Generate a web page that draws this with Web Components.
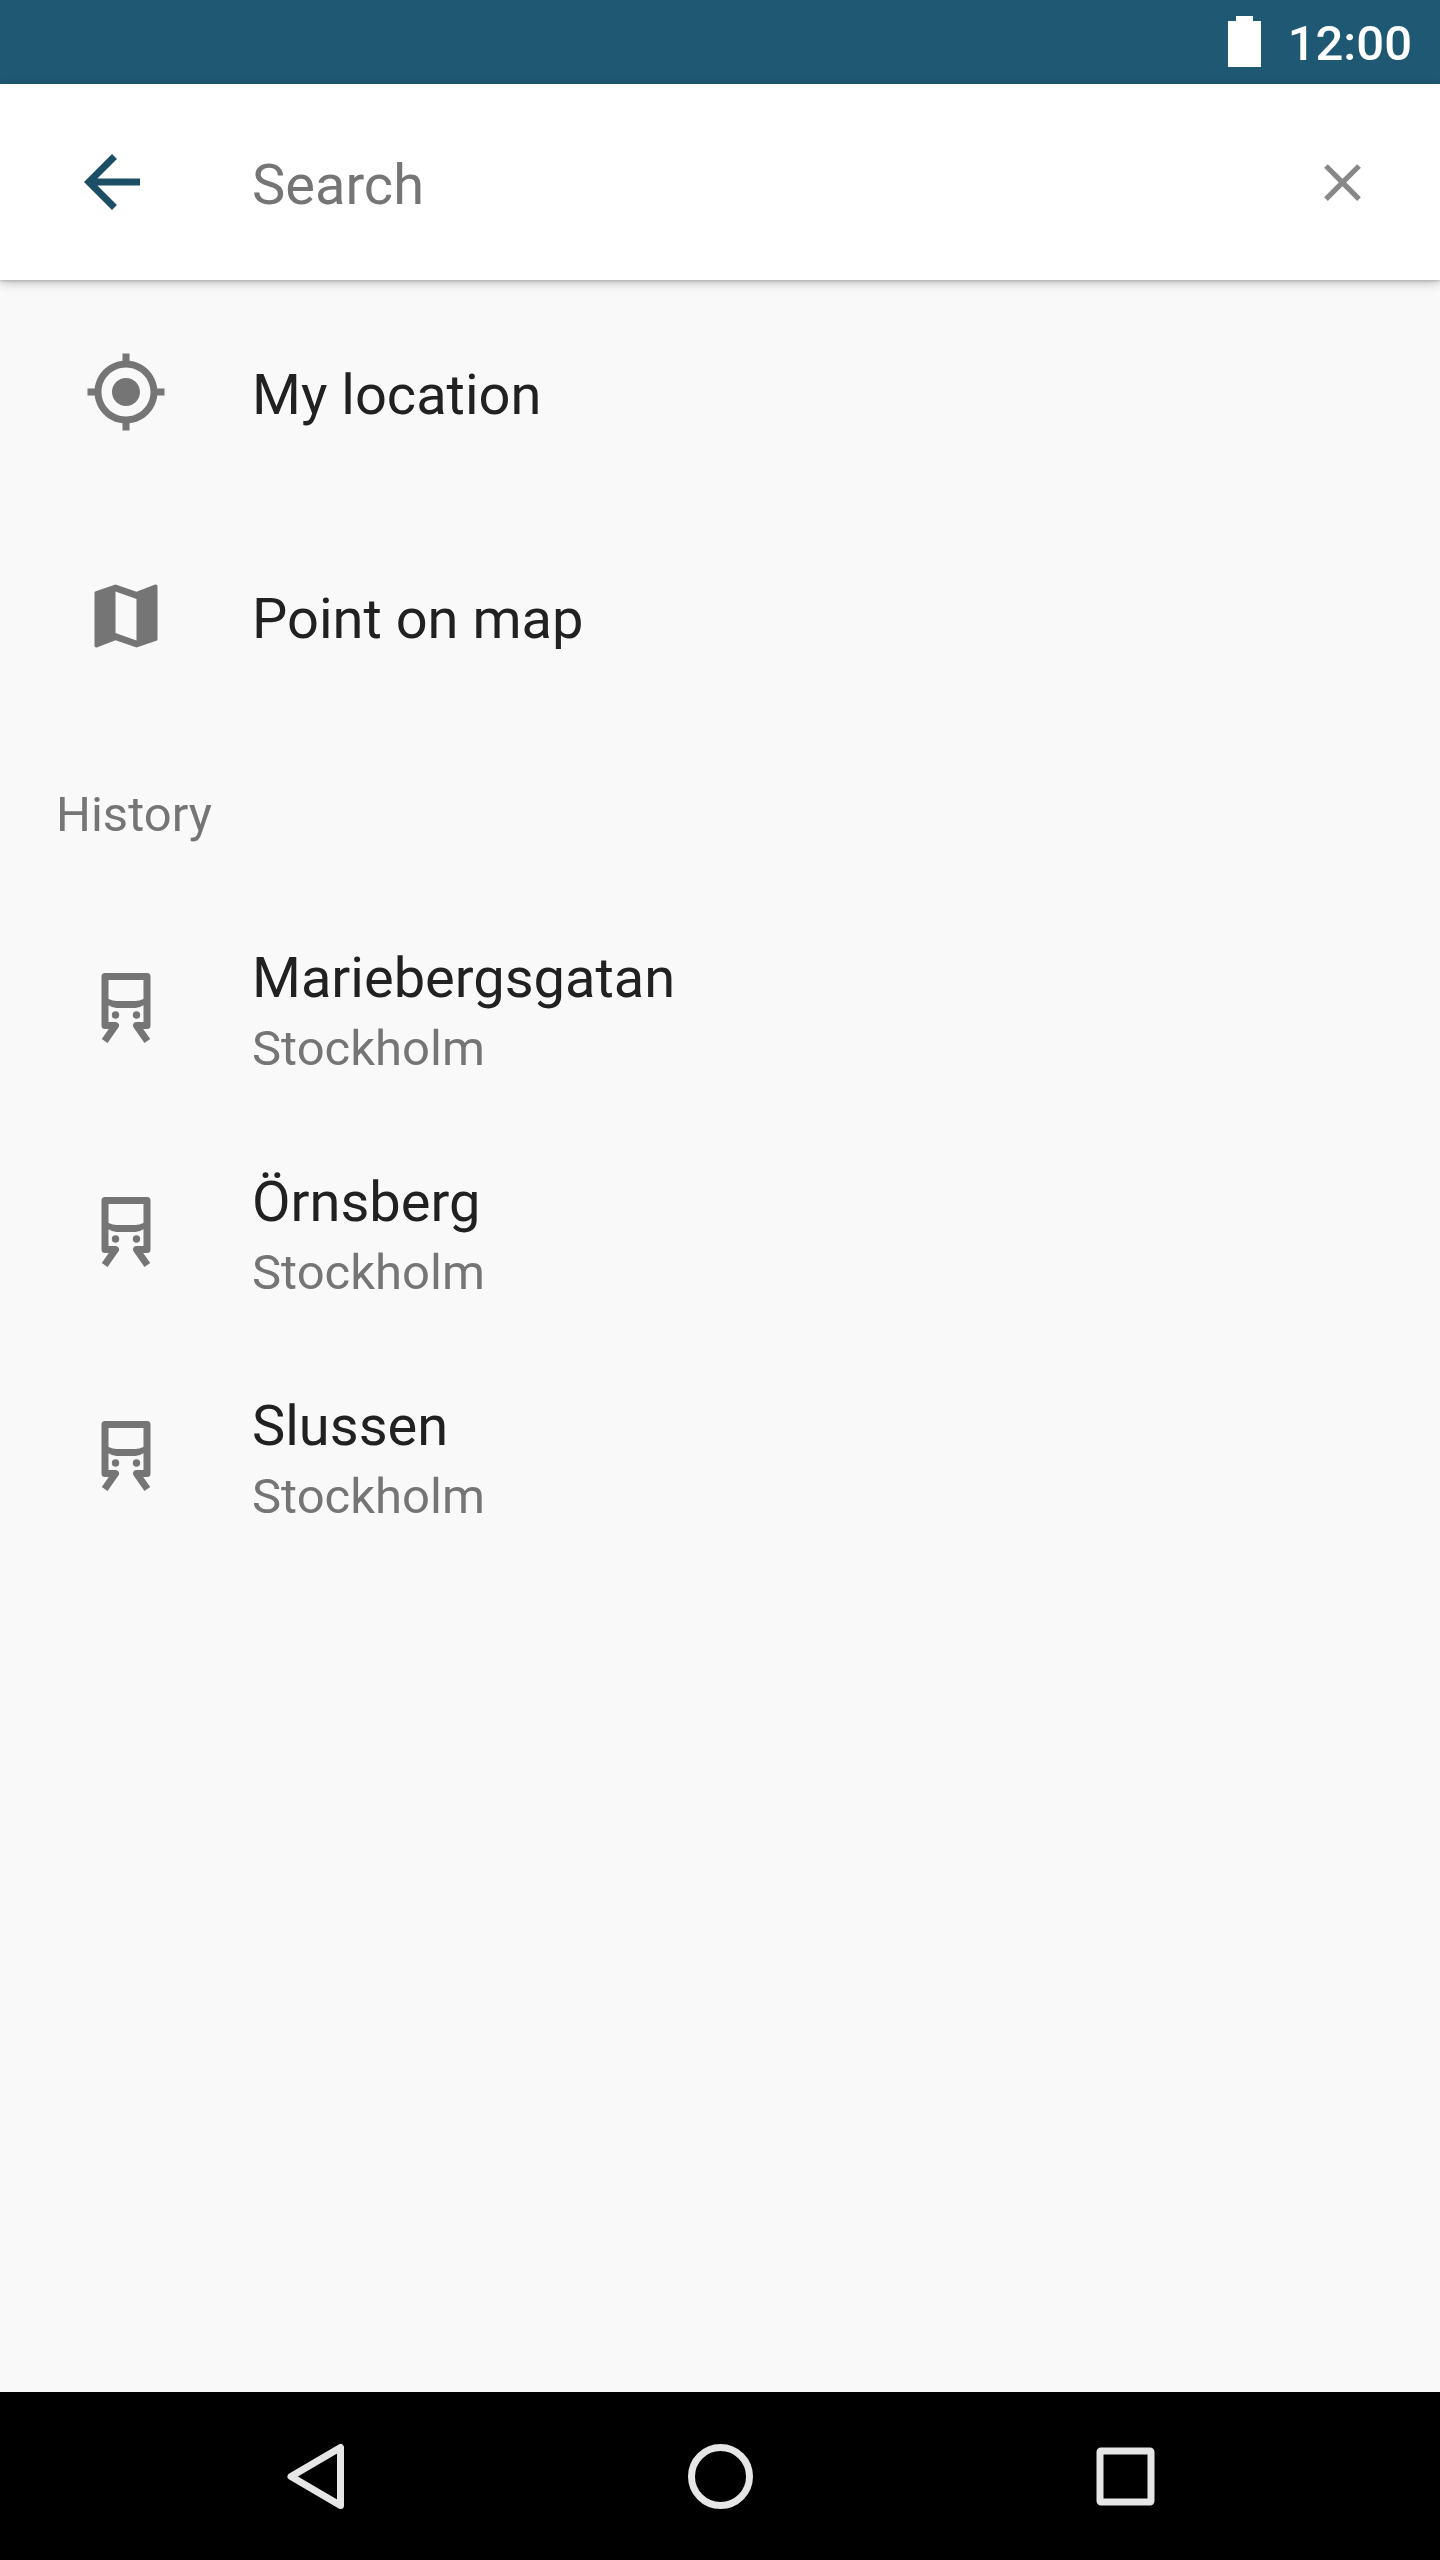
<!DOCTYPE html>
<html lang="en">
<head>
<meta charset="utf-8">
<meta name="viewport" content="width=device-width, initial-scale=1">
<title>Search</title>
<style>
  html, body { margin: 0; }
  body {
    background: #f9f9f9;
    font-family: Roboto, "Noto Sans", sans-serif;
    font-size: 56px;
    line-height: 74px;
    color: #212121;
    --primary: #1f5872;
    --primary-dark: #1c4f66;
    --secondary-text: #757575;
  }
</style>
</head>
<body>
<search-screen>
  <status-bar slot="status" time="12:00"></status-bar>
  <search-bar slot="bar" placeholder="Search"></search-bar>
  <place-list>
    <place-item icon="location">My location</place-item>
    <place-item icon="map">Point on map</place-item>
  </place-list>
  <place-list heading="History">
    <place-item icon="train">Mariebergsgatan<span slot="detail">Stockholm</span></place-item>
    <place-item icon="train">Örnsberg<span slot="detail">Stockholm</span></place-item>
    <place-item icon="train">Slussen<span slot="detail">Stockholm</span></place-item>
  </place-list>
  <navigation-bar slot="navigation"></navigation-bar>
</search-screen>

<script>
const ICONS = {
  back: '<path d="M20 11H7.83l5.59-5.59L12 4l-8 8 8 8 1.41-1.41L7.83 13H20v-2z"/>',
  close: '<path d="M19 6.41L17.59 5 12 10.59 6.41 5 5 6.41 10.59 12 5 17.59 6.41 19 12 13.41 17.59 19 19 17.59 13.41 12z"/>',
  location: '<path d="M12 8c-2.21 0-4 1.79-4 4s1.79 4 4 4 4-1.79 4-4-1.79-4-4-4zm8.94 3c-.46-4.17-3.77-7.48-7.94-7.94V1h-2v2.06C6.83 3.52 3.52 6.83 3.06 11H1v2h2.06c.46 4.17 3.77 7.48 7.94 7.94V23h2v-2.06c4.17-.46 7.48-3.77 7.94-7.94H23v-2h-2.06zM12 19c-3.87 0-7-3.13-7-7s3.13-7 7-7 7 3.13 7 7-3.13 7-7 7z"/>',
  map: '<path d="M20.5 3l-.16.03L15 5.1 9 3 3.36 4.9c-.21.07-.36.25-.36.48V20.500c0 .28.22.5.5.5l.16-.03L9 18.900l6 2.100 5.640-1.900c.21-.07.36-.25.36-.48V3.500c0-.28-.22-.5-.5-.5zM15 19l-6-2.110V5l6 2.110V19z"/>',
  train: '<path d="M5.900 21.450L9 17H6V3H18V17H15L18.100 21.450" fill="none" stroke="currentColor" stroke-width="2" stroke-linejoin="round"/><path d="M6.500 9.200L7 9.400Q8.300 10 9.300 10H14.700Q15.700 10 17 9.400L17.500 9.200V11.400L17 11.200Q15.700 12 14.700 12H9.300Q8.300 12 7 11.200L6.500 11.400z"/><circle cx="9" cy="14" r="1.050"/><circle cx="15" cy="14" r="1.050"/>'
};
const svg = name => `<svg viewBox="0 0 24 24" aria-hidden="true">${ICONS[name] || ''}</svg>`;

class SearchScreen extends HTMLElement {
  connectedCallback() {
    this.attachShadow({ mode: 'open' }).innerHTML = `
      <style>
        :host { display: flex; flex-direction: column; min-height: 100vh; }
        main { flex: 1; }
        header { position: sticky; top: 0; z-index: 1; }
      </style>
      <header><slot name="status"></slot><slot name="bar"></slot></header>
      <main><slot></slot></main>
      <slot name="navigation"></slot>`;
  }
}

class StatusBar extends HTMLElement {
  connectedCallback() {
    this.attachShadow({ mode: 'open' }).innerHTML = `
      <style>
        :host {
          display: flex; align-items: center; justify-content: flex-end; gap: 27px;
          height: 84px; padding: 0 28px; background: var(--primary); color: #fff;
          font-size: 49px; line-height: 66px; font-weight: 500;
        }
        svg { display: block; width: 33px; height: 52px; fill: currentColor; }
        time { padding-top: 4px; }
      </style>
      <svg viewBox="0 0 33 52" role="img" aria-label="Battery full"><path d="M8 0H25V5H33V51H0V5H8z"/></svg>
      <time>${this.getAttribute('time')}</time>`;
  }
}

class SearchBar extends HTMLElement {
  connectedCallback() {
    const label = this.getAttribute('placeholder');
    this.attachShadow({ mode: 'open' }).innerHTML = `
      <style>
        :host {
          display: block; background: #fff;
          box-shadow: 0 1px 3px rgba(0, 0, 0, .2), 0 3px 10px rgba(0, 0, 0, .22);
        }
        form { display: flex; align-items: center; height: 196px; padding: 0 56px; }
        button {
          display: flex; align-items: center; justify-content: center; flex: none;
          height: 112px; padding: 0; border: 0; background: none;
        }
        svg { display: block; fill: currentColor; }
        .back { width: 112px; color: var(--primary-dark); }
        .back svg { width: 84px; height: 84px; }
        .clear { width: 84px; color: #888; }
        .clear svg { width: 63px; height: 63px; }
        input {
          flex: 1; min-width: 0; height: 80px; margin: 0 0 0 84px; padding: 6px 0 0; border: 0;
          box-sizing: border-box; background: none; outline: none; font: inherit; color: #212121;
        }
        input::placeholder { color: var(--secondary-text); opacity: 1; }
      </style>
      <form role="search">
        <button class="back" type="button" aria-label="Back">${svg('back')}</button>
        <input type="text" aria-label="${label}" placeholder="${label}">
        <button class="clear" type="reset" aria-label="Clear">${svg('close')}</button>
      </form>`;
  }
}

class PlaceList extends HTMLElement {
  connectedCallback() {
    const heading = this.getAttribute('heading');
    this.attachShadow({ mode: 'open' }).innerHTML = `
      <style>
        :host { display: block; }
        h2 {
          display: flex; align-items: center; box-sizing: border-box; height: 168px;
          margin: 0; padding: 6px 56px 0; font-size: 49px; line-height: 66px;
          font-weight: 400; color: var(--secondary-text);
        }
      </style>
      ${heading ? `<h2>${heading}</h2>` : ''}
      <div role="list"><slot></slot></div>`;
  }
}

class PlaceItem extends HTMLElement {
  connectedCallback() {
    this.setAttribute('role', 'listitem');
    this.attachShadow({ mode: 'open' }).innerHTML = `
      <style>
        :host { display: block; }
        button {
          display: flex; align-items: center; gap: 84px; width: 100%; min-height: 224px;
          padding: 0 84px; border: 0; background: none; font: inherit; color: inherit; text-align: left;
        }
        svg { display: block; flex: none; width: 84px; height: 84px; fill: currentColor; color: var(--secondary-text); }
        .text { display: flex; flex-direction: column; padding-top: 6px; }
        .detail { padding-top: 2px; font-size: 49px; line-height: 64px; color: var(--secondary-text); }
      </style>
      <button type="button">
        ${svg(this.getAttribute('icon'))}
        <span class="text">
          <span><slot></slot></span>
          ${this.querySelector('[slot=detail]') ? '<span class="detail"><slot name="detail"></slot></span>' : ''}
        </span>
      </button>`;
  }
}

class NavigationBar extends HTMLElement {
  connectedCallback() {
    this.attachShadow({ mode: 'open' }).innerHTML = `
      <style>
        :host { display: block; background: #000; color: #e6e6e6; }
        nav { display: flex; height: 168px; padding: 0 112px; }
        button {
          flex: 1; display: flex; align-items: center; justify-content: center;
          padding: 0; border: 0; background: none; color: inherit;
        }
        svg { display: block; width: 84px; height: 84px; fill: none; stroke: currentColor; stroke-width: 7; stroke-linejoin: round; }
      </style>
      <nav aria-label="System">
        <button type="button" aria-label="Back"><svg viewBox="0 0 84 84"><path d="M18 42.500L67.500 13.500V71.500z"/></svg></button>
        <button type="button" aria-label="Home"><svg viewBox="0 0 84 84"><circle cx="42.500" cy="42.500" r="29"/></svg></button>
        <button type="button" aria-label="Overview"><svg viewBox="0 0 84 84"><rect x="17" y="17" width="51" height="51" rx="1"/></svg></button>
      </nav>`;
  }
}

customElements.define('search-screen', SearchScreen);
customElements.define('status-bar', StatusBar);
customElements.define('search-bar', SearchBar);
customElements.define('place-list', PlaceList);
customElements.define('place-item', PlaceItem);
customElements.define('navigation-bar', NavigationBar);
</script>
</body>
</html>
